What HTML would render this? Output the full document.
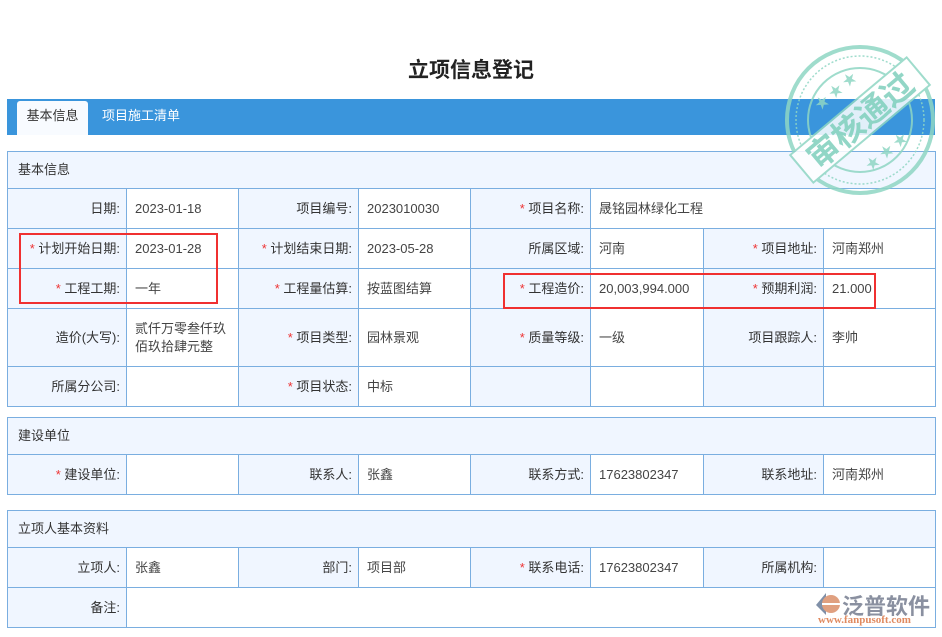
<!DOCTYPE html><html><head><meta charset="utf-8"><style>
body{margin:0;width:942px;height:637px;background:#fff;font-family:"Liberation Sans","Noto Sans CJK SC",sans-serif;font-size:13px;color:#333;position:relative;overflow:hidden}
.a{position:absolute}
.title{left:0;width:942px;top:54px;text-align:center;font-size:21px;font-weight:bold;color:#222}
.tabbar{left:7px;top:99px;width:928px;height:36px;background:#3a95dc}
.tab{top:101px;height:34px;line-height:30px;color:#fff;font-size:13px}
table{position:absolute;left:7px;border-collapse:collapse;table-layout:fixed}
td{border:1px solid #7aaee0;padding:0 8px;height:39px;line-height:18px}
td.l{background:#f0f6ff;text-align:right;padding-right:6px}
td.h{background:#f0f6ff;text-align:left;padding-left:10px;height:36px}
td.v{background:#fff;color:#444}
i{color:#e33;font-style:normal}
.box{border:2px solid #f03030}
</style></head><body>
<div class="a title">立项信息登记</div>
<div class="a tabbar"></div>
<div class="a tab" style="left:17px;width:71px;background:#f8fbff;color:#333;text-align:center;border-radius:3px 3px 0 0">基本信息</div>
<div class="a tab" style="left:102px">项目施工清单</div>
<table style="top:151px;width:928px">
<colgroup><col width="119"><col width="112"><col width="120"><col width="112"><col width="120"><col width="113"><col width="120"><col width="112"></colgroup>
<tr><td class="h" colspan="8">基本信息</td></tr>
<tr><td class="l">日期:</td><td class="v">2023-01-18</td><td class="l">项目编号:</td><td class="v">2023010030</td><td class="l"><i>*</i> 项目名称:</td><td class="v" colspan="3">晟铭园林绿化工程</td></tr>
<tr><td class="l"><i>*</i> 计划开始日期:</td><td class="v">2023-01-28</td><td class="l"><i>*</i> 计划结束日期:</td><td class="v">2023-05-28</td><td class="l">所属区域:</td><td class="v">河南</td><td class="l"><i>*</i> 项目地址:</td><td class="v">河南郑州</td></tr>
<tr><td class="l"><i>*</i> 工程工期:</td><td class="v">一年</td><td class="l"><i>*</i> 工程量估算:</td><td class="v">按蓝图结算</td><td class="l"><i>*</i> 工程造价:</td><td class="v">20,003,994.000</td><td class="l"><i>*</i> 预期利润:</td><td class="v">21.000</td></tr>
<tr><td class="l" style="height:57px">造价(大写):</td><td class="v">贰仟万零叁仟玖佰玖拾肆元整</td><td class="l"><i>*</i> 项目类型:</td><td class="v">园林景观</td><td class="l"><i>*</i> 质量等级:</td><td class="v">一级</td><td class="l">项目跟踪人:</td><td class="v">李帅</td></tr>
<tr><td class="l" style="height:37px">所属分公司:</td><td class="v"></td><td class="l"><i>*</i> 项目状态:</td><td class="v">中标</td><td class="l"></td><td class="v"></td><td class="l"></td><td class="v"></td></tr>
</table>
<table style="top:417px;width:928px">
<colgroup><col width="119"><col width="112"><col width="120"><col width="112"><col width="120"><col width="113"><col width="120"><col width="112"></colgroup>
<tr><td class="h" colspan="8">建设单位</td></tr>
<tr><td class="l"><i>*</i> 建设单位:</td><td class="v"></td><td class="l">联系人:</td><td class="v">张鑫</td><td class="l">联系方式:</td><td class="v">17623802347</td><td class="l">联系地址:</td><td class="v">河南郑州</td></tr>
</table>
<table style="top:510px;width:928px">
<colgroup><col width="119"><col width="112"><col width="120"><col width="112"><col width="120"><col width="113"><col width="120"><col width="112"></colgroup>
<tr><td class="h" colspan="8">立项人基本资料</td></tr>
<tr><td class="l">立项人:</td><td class="v">张鑫</td><td class="l">部门:</td><td class="v">项目部</td><td class="l"><i>*</i> 联系电话:</td><td class="v">17623802347</td><td class="l">所属机构:</td><td class="v"></td></tr>
<tr><td class="l">备注:</td><td class="v" colspan="7"></td></tr>
</table>
<div class="a box" style="left:19px;top:233px;width:195px;height:67px"></div>
<div class="a box" style="left:503px;top:273px;width:369px;height:32px"></div>
<svg class="a" style="left:782px;top:42px" width="156" height="156" viewBox="0 0 156 156">
<g fill="none" stroke="#8fd6c4" opacity="0.85">
<circle cx="78" cy="78" r="73" stroke-width="4"/><circle cx="78" cy="78" r="64" stroke-width="1.5" stroke-dasharray="2 2"/>
<circle cx="78" cy="78" r="52" stroke-width="2"/>
<g transform="rotate(-40 78 78)"><rect x="2" y="60" width="152" height="36" fill="#fff" stroke-width="2"/></g>
</g>
<g transform="rotate(-40 78 78)" opacity="0.85"><text x="78" y="90" text-anchor="middle" font-size="32" font-weight="bold" fill="#7fd0bd" font-family="Noto Sans CJK SC,sans-serif">审核通过</text>
<text x="78" y="45" text-anchor="middle" font-size="14" fill="#8fd6c4">★ ★ ★</text><text x="78" y="124" text-anchor="middle" font-size="14" fill="#8fd6c4">★ ★ ★</text></g>
</svg>
<svg class="a" style="left:812px;top:591px" width="30" height="26"><path d="M14 2 L4 14 L14 24 Z" fill="#8090a8"/><circle cx="19" cy="13" r="9" fill="#e0a080"/><path d="M10 13 h18" stroke="#fff" stroke-width="2"/></svg>
<div class="a" style="left:842px;top:589px;font-size:22px;font-weight:bold;color:#8a90a0;letter-spacing:0px">泛普软件</div>
<div class="a" style="left:818px;top:614px;font-size:11px;color:#e08a60;font-family:'Liberation Serif',serif;font-weight:bold">www.fanpusoft.com</div>
</body></html>
